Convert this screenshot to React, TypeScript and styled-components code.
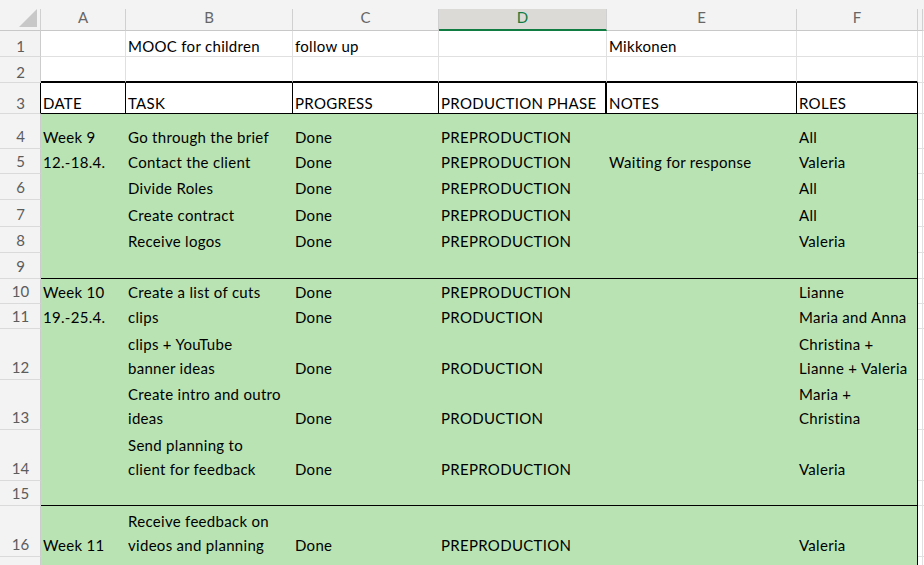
import React from 'react';
import styled, { createGlobalStyle } from 'styled-components';

const Global = createGlobalStyle`
  html, body { margin: 0; padding: 0; background: #f3f3f3; overflow: hidden; }
  body { font-family: Lato, "Open Sans", "Liberation Sans", sans-serif; }
`;

const COLS = '41px 85px 167px 146px 168px 190px 121px 5px 1fr';
const GREEN = '#bae3b3';
const GRID = '#e0e0e0';
const HEAD_LINE = '#d0d0d0';
const BLACK = '#000';

const Sheet = styled.div`
  width: 924px;
  height: 565px;
  overflow: hidden;
  display: flex;
  flex-direction: column;
  background: #f3f3f3;
`;

const TopStrip = styled.div`
  height: 9px;
  flex: none;
  background: #f3f3f3;
`;

const Row = styled.div<{ $h: number }>`
  display: grid;
  grid-template-columns: ${COLS};
  height: ${(p) => p.$h}px;
  flex: none;
`;

const Corner = styled.div`
  box-sizing: border-box;
  background: #f3f3f3;
  border-right: 1px solid ${HEAD_LINE};
  border-bottom: 1px solid #c8c8c8;
  display: flex;
  align-items: flex-end;
  justify-content: flex-end;
  padding: 0 3px 3px 0;
`;

const ColHead = styled.div<{ $sel?: boolean; $line?: boolean }>`
  box-sizing: border-box;
  background: ${(p) => (p.$sel ? '#dcdad7' : '#f3f3f3')};
  border-right: 1px solid ${(p) => (p.$line === false ? 'transparent' : HEAD_LINE)};
  border-bottom: ${(p) => (p.$sel ? '2px solid #107c41' : '1px solid #c8c8c8')};
  color: ${(p) => (p.$sel ? '#107c41' : '#666')};
  font-size: 15px;
  display: flex;
  align-items: center;
  justify-content: center;
  padding-bottom: ${(p) => (p.$sel ? '4px' : '5px')};
  overflow: hidden;
`;

const RowNum = styled.div<{ $edge?: string }>`
  box-sizing: border-box;
  background: #f3f3f3;
  color: #5c5c5c;
  font-size: 15px;
  line-height: 24px;
  display: flex;
  align-items: flex-end;
  justify-content: center;
  border-right: 1px solid ${(p) => p.$edge ?? '#cccccc'};
  border-bottom: 1px solid #dadada;
  padding-left: 1px;
`;

const Cell = styled.div<{ $bg: string; $r: string; $b: string }>`
  box-sizing: border-box;
  background: ${(p) => p.$bg};
  border-right: ${(p) => p.$r};
  border-bottom: ${(p) => p.$b};
  display: flex;
  align-items: flex-end;
  padding-left: 2px;
  font-size: 15px;
  line-height: 24px;
  letter-spacing: 0.3px;
  color: #000;
  white-space: pre;
  min-width: 0;
`;

const Text = styled.span<{ $drop?: boolean }>`
  position: relative;
  top: ${(p) => (p.$drop ? '2px' : '0')};
`;

type Kind = 'plain' | 'plainLast' | 'head' | 'green' | 'greenEnd';

interface RowSpec {
  n: string;
  h: number;
  kind: Kind;
  cells: string[];
}

const rows: RowSpec[] = [
  { n: '1', h: 26, kind: 'plain', cells: ['', 'MOOC for children', 'follow up', '', 'Mikkonen', ''] },
  { n: '2', h: 26, kind: 'plainLast', cells: ['', '', '', '', '', ''] },
  { n: '3', h: 31, kind: 'head', cells: ['DATE', 'TASK', 'PROGRESS', 'PRODUCTION PHASE', 'NOTES', 'ROLES'] },
  { n: '4', h: 35, kind: 'green', cells: ['Week 9', 'Go through the brief', 'Done', 'PREPRODUCTION', '', 'All'] },
  { n: '5', h: 25, kind: 'green', cells: ['12.-18.4.', 'Contact the client', 'Done', 'PREPRODUCTION', 'Waiting for response', 'Valeria'] },
  { n: '6', h: 26, kind: 'green', cells: ['', 'Divide Roles', 'Done', 'PREPRODUCTION', '', 'All'] },
  { n: '7', h: 27, kind: 'green', cells: ['', 'Create contract', 'Done', 'PREPRODUCTION', '', 'All'] },
  { n: '8', h: 26, kind: 'green', cells: ['', 'Receive logos', 'Done', 'PREPRODUCTION', '', 'Valeria'] },
  { n: '9', h: 26, kind: 'greenEnd', cells: ['', '', '', '', '', ''] },
  { n: '10', h: 25, kind: 'green', cells: ['Week 10', 'Create a list of cuts', 'Done', 'PREPRODUCTION', '', 'Lianne'] },
  { n: '11', h: 25, kind: 'green', cells: ['19.-25.4.', 'clips', 'Done', 'PRODUCTION', '', 'Maria and Anna'] },
  { n: '12', h: 51, kind: 'green', cells: ['', 'clips + YouTube\nbanner ideas', 'Done', 'PRODUCTION', '', 'Christina +\nLianne + Valeria'] },
  { n: '13', h: 50, kind: 'green', cells: ['', 'Create intro and outro\nideas', 'Done', 'PRODUCTION', '', 'Maria +\nChristina'] },
  { n: '14', h: 51, kind: 'green', cells: ['', 'Send planning to\nclient for feedback', 'Done', 'PREPRODUCTION', '', 'Valeria'] },
  { n: '15', h: 25, kind: 'greenEnd', cells: ['', '', '', '', '', ''] },
  { n: '16', h: 51, kind: 'green', cells: ['Week 11', 'Receive feedback on\nvideos and planning', 'Done', 'PREPRODUCTION', '', 'Valeria'] },
  { n: '17', h: 51, kind: 'green', cells: ['', 'Make the feedback\nchanges to videos', 'Done', 'PRODUCTION', '', 'All'] },
];

function cellStyle(kind: Kind, i: number) {
  const last = i === 5;
  switch (kind) {
    case 'plain':
      return { bg: '#fff', r: `1px solid ${GRID}`, b: `1px solid ${GRID}` };
    case 'plainLast':
      return { bg: '#fff', r: `1px solid ${GRID}`, b: `2px solid ${BLACK}` };
    case 'head':
      return { bg: '#fff', r: `${i === 3 ? 2 : 1}px solid ${BLACK}`, b: `1px solid ${BLACK}` };
    case 'green':
      return { bg: GREEN, r: last ? `1px solid ${BLACK}` : 'none', b: 'none' };
    case 'greenEnd':
      return { bg: GREEN, r: last ? `1px solid ${BLACK}` : 'none', b: `1px solid ${BLACK}` };
  }
}

const Triangle = () => (
  <svg width="18" height="18" viewBox="0 0 18 18">
    <polygon points="0,18 18,18 18,0" fill="#c8c8c8" />
  </svg>
);

const letters = ['A', 'B', 'C', 'D', 'E', 'F'];

export default function App() {
  return (
    <Sheet>
      <Global />
      <TopStrip />
      <Row $h={22}>
        <Corner>
          <Triangle />
        </Corner>
        {letters.map((l) => (
          <ColHead key={l} $sel={l === 'D'}>
            {l}
          </ColHead>
        ))}
        <ColHead />
        <ColHead $line={false} />
      </Row>
      {rows.map((r) => {
        const drop = r.kind === 'plain' || r.kind === 'plainLast' || r.kind === 'head';
        return (
          <Row key={r.n} $h={r.h}>
            <RowNum $edge={r.kind === 'head' ? BLACK : undefined}>
              <Text $drop={drop}>{r.n}</Text>
            </RowNum>
            {r.cells.map((c, i) => {
              const s = cellStyle(r.kind, i);
              return (
                <Cell key={i} $bg={s.bg} $r={s.r} $b={s.b}>
                  {c && <Text $drop={drop}>{c}</Text>}
                </Cell>
              );
            })}
            <Cell $bg="#fff" $r={`1px solid ${GRID}`} $b={`1px solid ${GRID}`} />
            <Cell $bg="#fff" $r="none" $b={`1px solid ${GRID}`} />
          </Row>
        );
      })}
    </Sheet>
  );
}
